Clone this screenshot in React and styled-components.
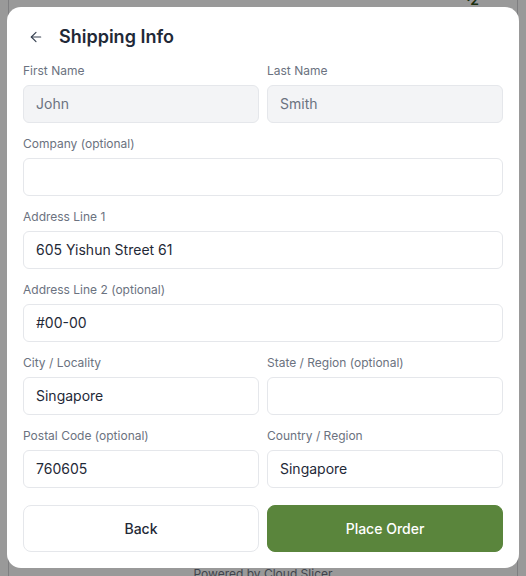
import React from "react";
import styled, { createGlobalStyle } from "styled-components";
import { ArrowLeft } from "lucide-react";

const GlobalStyle = createGlobalStyle`
  * { box-sizing: border-box; }
  html, body {
    margin: 0;
    padding: 0;
    background: #fff;
    font-family: Inter, "Noto Sans", "Liberation Sans", sans-serif;
    color: #1f2937;
  }
`;

// 뒤쪽 페이지 (오버레이에 가려짐)
const Page = styled.div`
  padding: 0 8px;
  height: 576px;
  overflow: hidden;
`;

const PageCard = styled.div`
  height: 590px;
  border-left: 1px solid #d4d4d8;
  border-right: 1px solid #d4d4d8;
  display: flex;
  flex-direction: column;
`;

const PageTop = styled.div`
  display: flex;
  justify-content: flex-end;
  padding-right: 38px;
  margin-top: -9px;
  font-size: 14px;
  font-weight: 600;
  color: #2f4f1a;
`;

const Spacer = styled.div`
  flex: 1;
`;

const PoweredBy = styled.div`
  text-align: center;
  font-size: 12px;
  line-height: 16px;
  padding-bottom: 8px;
  color: #6b7280;
`;

// 모달 배경
const Overlay = styled.div`
  position: fixed;
  inset: 0;
  background: rgba(0, 0, 0, 0.4);
  display: flex;
  align-items: center;
  justify-content: center;
  padding-bottom: 2px;
`;

const Modal = styled.div`
  width: 512px;
  background: #fff;
  border-radius: 14px;
  padding: 16px;
  display: flex;
  flex-direction: column;
`;

const Header = styled.div`
  display: flex;
  align-items: center;
  gap: 10px;
  height: 28px;
  margin-bottom: 12px;
`;

const BackIcon = styled.button`
  border: none;
  background: none;
  width: 26px;
  height: 26px;
  padding: 5px;
  display: flex;
  align-items: center;
  justify-content: center;
  color: #374151;
  cursor: pointer;
`;

const Title = styled.h2`
  margin: 0;
  font-size: 18px;
  line-height: 28px;
  font-weight: 600;
  color: #1f2937;
`;

const Form = styled.div`
  display: flex;
  flex-direction: column;
  gap: 13px;
`;

const Row = styled.div`
  display: grid;
  grid-template-columns: ${(p) => (p.$cols === 2 ? "1fr 1fr" : "1fr")};
  gap: 8px;
`;

const Field = styled.label`
  display: flex;
  flex-direction: column;
  gap: 6px;
`;

const Label = styled.span`
  font-size: 12px;
  line-height: 16px;
  color: #6b7280;
`;

const Input = styled.input`
  height: 38px;
  width: 100%;
  border: 1px solid #e5e7eb;
  border-radius: 6px;
  padding: 0 12px;
  font-family: inherit;
  font-size: 14px;
  color: ${(p) => (p.disabled ? "#6b7280" : "#1f2937")};
  background: ${(p) => (p.disabled ? "#f3f4f6" : "#fff")};
  outline: none;
`;

const Actions = styled.div`
  display: grid;
  grid-template-columns: 1fr 1fr;
  gap: 8px;
  margin-top: 17px;
`;

const Button = styled.button`
  height: 47px;
  border-radius: 8px;
  font-family: inherit;
  font-size: 14px;
  font-weight: 500;
  cursor: pointer;
  border: 1px solid ${(p) => (p.$primary ? "#5a853c" : "#e5e7eb")};
  background: ${(p) => (p.$primary ? "#5a853c" : "#fff")};
  color: ${(p) => (p.$primary ? "#fff" : "#1f2937")};
`;

const rows = [
  [
    { label: "First Name", value: "John", disabled: true },
    { label: "Last Name", value: "Smith", disabled: true },
  ],
  [{ label: "Company (optional)", value: "" }],
  [{ label: "Address Line 1", value: "605 Yishun Street 61" }],
  [{ label: "Address Line 2 (optional)", value: "#00-00" }],
  [
    { label: "City / Locality", value: "Singapore" },
    { label: "State / Region (optional)", value: "" },
  ],
  [
    { label: "Postal Code (optional)", value: "760605" },
    { label: "Country / Region", value: "Singapore" },
  ],
];

export default function App() {
  return (
    <>
      <GlobalStyle />
      <Page>
        <PageCard>
          <PageTop>·2</PageTop>
          <Spacer />
          <PoweredBy>Powered by Cloud Slicer</PoweredBy>
        </PageCard>
      </Page>
      <Overlay>
        <Modal>
          <Header>
            <BackIcon aria-label="Back">
              <ArrowLeft size={16} strokeWidth={1.75} />
            </BackIcon>
            <Title>Shipping Info</Title>
          </Header>
          <Form>
            {rows.map((row, i) => (
              <Row key={i} $cols={row.length}>
                {row.map((f) => (
                  <Field key={f.label}>
                    <Label>{f.label}</Label>
                    <Input defaultValue={f.value} disabled={f.disabled} />
                  </Field>
                ))}
              </Row>
            ))}
          </Form>
          <Actions>
            <Button>Back</Button>
            <Button $primary>Place Order</Button>
          </Actions>
        </Modal>
      </Overlay>
    </>
  );
}
